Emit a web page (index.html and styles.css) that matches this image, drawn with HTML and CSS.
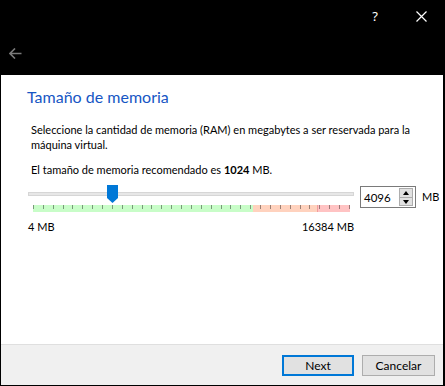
FILE: index.html
```html
<!DOCTYPE html>
<html lang="es">
<head>
<meta charset="utf-8">
<title>Tamaño de memoria</title>
<link rel="stylesheet" href="styles.css">
</head>
<body>
<div class="window">
  <div class="header">
    <div class="caption">
      <span class="cap-btn help">?</span>
      <span class="cap-btn close">
        <svg width="11" height="11" viewBox="0 0 11 11"><path d="M0.5 0.5 L10.5 10.5 M10.5 0.5 L0.5 10.5" stroke="#fff" stroke-width="1.2" fill="none"/></svg>
      </span>
    </div>
    <div class="back">
      <svg width="13" height="11" viewBox="0 0 13 11"><path d="M6 0.5 L1 5.5 L6 10.5 M1 5.5 H12.5" stroke="#7a7a7a" stroke-width="1.6" fill="none"/></svg>
    </div>
  </div>
  <div class="page">
    <div class="main">
      <h1 class="title">Tamaño de memoria</h1>
      <p class="desc">Seleccione la cantidad de memoria (RAM) en megabytes a ser reservada para la máquina virtual.</p>
      <p class="desc rec">El tamaño de memoria recomendado es <b>1024</b> MB.</p>
      <div class="slider-row">
        <div class="slider">
          <div class="groove"></div>
          <div class="handle"></div>
          <div class="scale">
            <div class="zone green"></div>
            <div class="zone orange"></div>
            <div class="zone red"></div>
          </div>
          <div class="limits"><span>4 MB</span><span>16384 MB</span></div>
        </div>
        <div class="spin">
          <span class="spin-val">4096</span>
          <span class="spin-btns">
            <span class="sb up"></span>
            <span class="sb down"></span>
          </span>
        </div>
        <span class="unit">MB</span>
      </div>
    </div>
    <div class="footer">
      <button class="btn default">Next</button>
      <button class="btn">Cancelar</button>
    </div>
  </div>
</div>
</body>
</html>
```
FILE: styles.css
```css
html, body {
  margin: 0;
  padding: 0;
  background: #000;
}
body {
  width: 445px;
  height: 386px;
  overflow: hidden;
  font-family: Lato, "Noto Sans", sans-serif;
  font-size: 11px;
  color: #000;
}
.window {
  display: flex;
  flex-direction: column;
  height: 386px;
}
.header {
  height: 75px;
  flex: none;
}
.caption {
  display: flex;
  justify-content: flex-end;
  height: 32px;
}
.cap-btn {
  width: 46px;
  height: 32px;
  display: flex;
  align-items: center;
  justify-content: center;
  color: #fff;
}
.help {
  font-family: "Noto Sans", sans-serif;
  font-size: 13px;
}
.close {
  margin-right: 1px;
}
.back {
  padding: 16px 0 0 9px;
  height: 11px;
  display: flex;
}
.page {
  flex: 1;
  background: #fff;
  margin: 0 2px 1px 1px;
  display: flex;
  flex-direction: column;
}
.main {
  flex: 1;
  padding: 0 0 0 26px;
}
.title {
  margin: 12px 0 0;
  font-weight: normal;
  font-size: 16px;
  color: #1656c4;
  line-height: 20px;
}
.desc {
  margin: 15px 0 0 4px;
  line-height: 15px;
  width: 392px;
}
.desc.rec {
  margin-top: 10px;
}
.desc b { font-weight: bold; }
.slider-row {
  display: flex;
  align-items: flex-start;
  margin-top: 8px;
}
.slider {
  width: 326px;
  position: relative;
  margin-left: 1px;
}
.groove {
  margin-top: 7px;
  height: 2px;
  border: 1px solid #d6d6d6;
  background: #e7e7e7;
}
.handle {
  position: absolute;
  left: 79px;
  top: 0;
  width: 11px;
  height: 18px;
  background: #0078d7;
  clip-path: polygon(0 0, 100% 0, 100% 72%, 50% 100%, 0 72%);
}
.scale {
  margin: 9px 4px 0 5px;
  height: 7px;
  display: flex;
  isolation: isolate;
  background-image: repeating-linear-gradient(to right, #9a9a9a 0, #9a9a9a 1px, transparent 1px, transparent 9.875px);
  background-size: 100% 4px;
  background-repeat: no-repeat;
}
.zone { height: 7px; mix-blend-mode: multiply; }
.green { width: 220px; background: #c8fdc8; }
.orange { width: 64px; background: #ffd2be; }
.red { flex: 1; background: #ffc3c3; border-left: 1px solid #f29d9d; }
.limits {
  display: flex;
  justify-content: space-between;
  margin-top: 8px;
  line-height: 14px;
}
.spin {
  margin-left: 6px;
  margin-top: 1px;
  width: 54px;
  height: 20px;
  border: 1px solid #7a7a7a;
  display: flex;
  align-items: center;
  justify-content: space-between;
  background: #fff;
}
.spin-val {
  padding-left: 3px;
  font-size: 11.5px;
}
.spin-btns {
  display: flex;
  flex-direction: column;
  margin-right: 2px;
  width: 14px;
  height: 18px;
  border: 1px solid #adadad;
  box-sizing: border-box;
  background: #e1e1e1;
}
.sb {
  flex: 1;
  position: relative;
}
.sb.up { border-bottom: 1px solid #adadad; }
.sb::after {
  content: "";
  position: absolute;
  left: 3px;
  border-left: 3.5px solid transparent;
  border-right: 3.5px solid transparent;
}
.sb.up::after { top: 2px; border-bottom: 4px solid #000; }
.sb.down::after { top: 2px; border-top: 4px solid #000; }
.unit {
  margin-left: 6px;
  margin-top: 5px;
}
.footer {
  flex: none;
  height: 41px;
  border-top: 1px solid #dfdfdf;
  background: #f0f0f0;
  display: flex;
  justify-content: flex-end;
  align-items: flex-start;
  padding: 10px 8px 0 0;
  box-sizing: border-box;
  gap: 8px;
}
.btn {
  font-family: inherit;
  font-size: 12px;
  width: 73px;
  height: 21px;
  background: #e1e1e1;
  border: 1px solid #adadad;
  padding: 0;
  color: #000;
}
.btn.default {
  border: 2px solid #0078d7;
  width: 72px;
}
```
